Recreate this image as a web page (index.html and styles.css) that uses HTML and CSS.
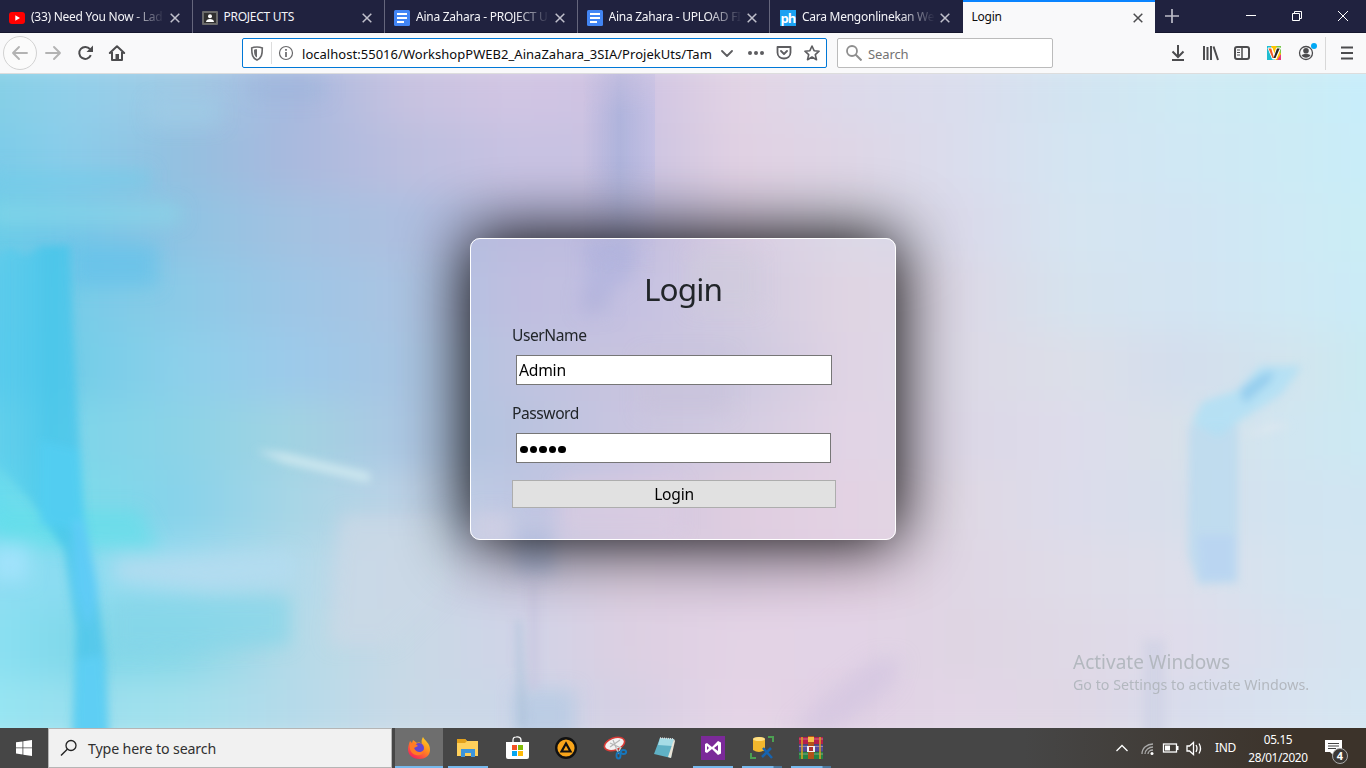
FILE: index.html
```html
<!DOCTYPE html>
<html lang="en">
<head>
<meta charset="utf-8">
<title>Login</title>
<link rel="stylesheet" href="styles.css">
</head>
<body>
<div class="screen">
  <header class="tabs">
    <div class="tab">
      <svg class="fav" viewBox="0 0 16 16"><rect y="2" width="16" height="12" rx="3" fill="#f00"/><path d="M6.3 5.3v5.4L11 8z" fill="#fff"/></svg>
      <span class="tab-title fade">(33) Need You Now - Lad</span>
      <svg class="x" viewBox="0 0 10 10"><path d="M.7.7l8.6 8.6M9.3.7L.7 9.3"/></svg>
    </div>
    <div class="tab">
      <svg class="fav" viewBox="0 0 16 16"><rect y="1" width="16" height="14" rx="1" fill="#6b6b6b"/><rect x="2" y="3" width="12" height="10" fill="#303030"/><circle cx="8" cy="6.300" r="2" fill="#fff"/><path d="M4 12c0-4 8-4 8 0z" fill="#fff"/></svg>
      <span class="tab-title">PROJECT UTS</span>
      <svg class="x" viewBox="0 0 10 10"><path d="M.7.7l8.6 8.6M9.3.7L.7 9.3"/></svg>
    </div>
    <div class="tab">
      <svg class="fav" viewBox="0 0 16 16"><rect width="16" height="16" rx="1.500" fill="#4285f4"/><path d="M3 4h10M3 8h10M3 12h7" stroke="#fff" stroke-width="1.800"/></svg>
      <span class="tab-title fade">Aina Zahara - PROJECT U</span>
      <svg class="x" viewBox="0 0 10 10"><path d="M.7.7l8.6 8.6M9.3.7L.7 9.3"/></svg>
    </div>
    <div class="tab">
      <svg class="fav" viewBox="0 0 16 16"><rect width="16" height="16" rx="1.500" fill="#4285f4"/><path d="M3 4h10M3 8h10M3 12h7" stroke="#fff" stroke-width="1.800"/></svg>
      <span class="tab-title fade">Aina Zahara - UPLOAD FI</span>
      <svg class="x" viewBox="0 0 10 10"><path d="M.7.7l8.6 8.6M9.3.7L.7 9.3"/></svg>
    </div>
    <div class="tab">
      <span class="fav ph">ph</span>
      <span class="tab-title fade">Cara Mengonlinekan We</span>
      <svg class="x" viewBox="0 0 10 10"><path d="M.7.7l8.6 8.6M9.3.7L.7 9.3"/></svg>
    </div>
    <div class="tab active">
      <span class="tab-title">Login</span>
      <svg class="x" viewBox="0 0 10 10"><path d="M.7.7l8.6 8.6M9.3.7L.7 9.3"/></svg>
    </div>
    <svg class="plus" viewBox="0 0 14 14"><path d="M7 0v14M0 7h14"/></svg>
    <svg class="winbtns" viewBox="0 0 112 20"><g fill="none" stroke="#fff" stroke-width="1"><path d="M6 9.500h10M52.500 7.500h7v7h-7zM54.500 7.500v-2h7v7h-2M98 5l10 10M108 5l-10 10"/></g></svg>
  </header>

  <nav class="toolbar">
    <svg class="navicons" viewBox="0 0 140 40">
      <circle cx="20" cy="20" r="16.500" fill="#fbfbfb" stroke="#d2d2d2"/>
      <g fill="none" stroke="#b3b3b3" stroke-width="1.900" stroke-linecap="round" stroke-linejoin="round"><path d="M27 20H13M19 14l-6 6 6 6M46 20h14M54 14l6 6-6 6"/></g>
      <path d="M90 16.200a6 6 0 1 0 .8 6" fill="none" stroke="#4c4c4e" stroke-width="2"/><path d="M93 12.500v6.500h-6.500z" fill="#4c4c4e"/>
      <path d="M109.800 20l7.200-6.800 7.200 6.800M112 19v8h10v-8" fill="none" stroke="#4c4c4e" stroke-width="2" stroke-linejoin="round" stroke-linecap="round"/><path d="M115.500 27v-6h3.500v6z" fill="#4c4c4e"/>
    </svg>
    <div class="urlbar">
      <svg class="urlleft" viewBox="0 0 52 28">
        <path d="M14 8c-2 0-3.800.3-5.300.9 0 6.500.6 10 5.300 12.100 4.700-2.100 5.300-5.600 5.300-12.100C17.800 8.300 16 8 14 8z" fill="none" stroke="#68686a" stroke-width="1.600"/><path d="M14 10.300c-1.200 0-2 .1-3 .4 0 4.300.5 6.400 3 7.900z" fill="#68686a"/>
        <path d="M28.500 3v22" stroke="#ddd"/>
        <circle cx="43" cy="14" r="6.500" fill="none" stroke="#68686a" stroke-width="1.200"/><path d="M43 13v5M43 10v1.800" stroke="#68686a" stroke-width="1.700"/>
      </svg>
      <span class="url">localhost:55016/WorkshopPWEB2_AinaZahara_3SIA/ProjekUts/Tam</span>
      <svg class="urlright" viewBox="0 0 106 28">
        <g fill="none" stroke="#5d5d60" stroke-width="1.800" stroke-linecap="round" stroke-linejoin="round"><path d="M2 12l5 5 5-5M57.500 8h13v5.500c0 8-13 8-13 0zM61 12l3 3 3-3"/><path d="M92 7l2.100 4.700 5 .5-3.800 3.500 1.200 5-4.500-2.700-4.500 2.700 1.200-5-3.800-3.500 5-.5z" stroke-width="1.600"/></g>
        <g fill="#5d5d60"><circle cx="30" cy="14" r="2"/><circle cx="36" cy="14" r="2"/><circle cx="42" cy="14" r="2"/></g>
      </svg>
    </div>
    <div class="search">
      <svg class="mag" viewBox="0 0 16 16"><circle cx="6" cy="6" r="5" fill="none" stroke="#8e8e8e" stroke-width="1.800"/><path d="M9.500 9.500l6 6" stroke="#8e8e8e" stroke-width="2"/></svg>
      <span>Search</span>
    </div>
    <svg class="tools" viewBox="0 0 206 40">
      <g fill="none" stroke="#4c4c4e" stroke-width="2">
        <path d="M18 12v12M12.500 18.500L18 24l5.500-5.500M12 27h12"/>
        <path d="M44 13v14M47.500 14v13M51 13v14M53.500 13.500L58 27"/>
        <rect x="75" y="14" width="14" height="12" rx="2"/><path d="M82 14v12" stroke-width="1.500"/><path d="M77 17h3M77 19.500h3M77 22h3" stroke-width="1"/>
        <circle cx="146" cy="20" r="6.500" stroke-width="1.300"/>
        <path d="M181 14.500h12M181 20h12M181 25.500h12"/>
      </g>
      <rect x="107" y="13" width="14" height="14" rx="1" fill="#ffc400"/><path d="M107 13h4l4 14h-8z" fill="#20bdd0"/><path d="M116 13h5v8z" fill="#76c84a"/><path d="M117 27l4-6v6z" fill="#e6397d"/><path d="M108 15h4l2.500 7L116.500 15h4l-4.500 11h-3.500z" fill="#fff" stroke="#fff"/><path d="M108.500 15.500h2.800l2.700 9.500h-1.500z" fill="#f05a28"/><path d="M113.500 25l3.500-9.500h2.700L115.500 25z" fill="#222"/>
      <circle cx="146" cy="17.800" r="2.800" fill="#4c4c4e"/><path d="M141.500 22c2-1.500 7-1.500 9 0-1.500 3.500-7.500 3.500-9 0z" fill="#4c4c4e"/>
      <circle cx="154" cy="13" r="3" fill="#00a8f5"/>
      <path d="M165.500 4v33" stroke="#d8d8d8"/>
    </svg>
  </nav>

  <main class="page">
    <div class="wash">
      <i class="r r1"></i><i class="r r2"></i><i class="r r3"></i><i class="r r4"></i><i class="r r5"></i>
      <i class="r r6"></i><i class="r r7"></i><i class="r r8"></i><i class="r r9"></i><i class="r r10"></i>
    </div>
    <svg class="strokes" viewBox="0 74 1366 654">
      <defs>
        <filter id="b3" x="-50%" y="-50%" width="200%" height="200%"><feGaussianBlur stdDeviation="4"/></filter>
        <filter id="b7" x="-50%" y="-50%" width="200%" height="200%"><feGaussianBlur stdDeviation="9"/></filter>
        <linearGradient id="pp"><stop offset="0" stop-color="#a9addb" stop-opacity="0"/><stop offset=".5" stop-color="#a8b0da" stop-opacity=".8"/><stop offset="1" stop-color="#c3bfe4" stop-opacity=".85"/></linearGradient>
        <linearGradient id="fd" x1="0" y1="0" x2="0" y2="1"><stop offset="0" stop-color="#fff" stop-opacity=".5"/><stop offset=".2" stop-color="#fff"/><stop offset=".45" stop-color="#fff"/><stop offset="1" stop-color="#fff" stop-opacity="0"/></linearGradient>
        <mask id="mk" maskUnits="userSpaceOnUse" x="570" y="74" width="100" height="200"><rect x="570" y="74" width="100" height="200" fill="url(#fd)"/></mask>
        <linearGradient id="cy"><stop offset="0" stop-color="#58cdee" stop-opacity=".5"/><stop offset=".5" stop-color="#45c5ea"/><stop offset="1" stop-color="#4fc5ec"/></linearGradient>
      </defs>
      <g filter="url(#b7)">
        <path d="M72 245h85v42H72z" fill="#65c2ea" opacity=".7"/>
        <path d="M-10 170h160v18H-10z" fill="#70cbe8" opacity=".6"/>
        <path d="M-10 205h190v18H-10z" fill="#8bdbe8" opacity=".6"/>
        <path d="M-10 510h150l20 40-160-5z" fill="#5edfea" opacity=".6"/>
        <path d="M-8 545h36v36H-8z" fill="#a0e2fa"/>
        <path d="M115 560l180-8v28l-80 10-100-10z" fill="#b4dcf0" opacity=".9"/>
        <path d="M112 598l178-3v50l-178 10z" fill="#84d6e8" opacity=".7"/>
        <path d="M340 515h110v70l-60 60h-60z" fill="#cad8e6" opacity=".8"/>
        <path d="M250 80h75v18h-75z" fill="#9cb3dc" opacity=".5"/>
        <path d="M150 100h70v25h-70z" fill="#9fcbe6" opacity=".6"/>
        <path d="M585 240h50v35l-48 35z" fill="#adb1dd" opacity=".6"/>
        <path d="M580 290h30v25h-30z" fill="#adb0d8" opacity=".4"/>
        <path d="M690 250h70v60h-70z" fill="#cfcbdc" opacity=".5"/>
        <path d="M640 355h90v60h-90z" fill="#c7c2da" opacity=".5"/>
        <path d="M560 480h120v55H560z" fill="#dccde1" opacity=".6"/>
        <path d="M472 512h40v30h-40z" fill="#d3d0e4" opacity=".7"/>
        <path d="M515 530h38l2 45h-40z" fill="#adb9dc" opacity=".7"/>
        <path d="M515 690h60v50h-60z" fill="#b7cae4" opacity=".8"/>
        <path d="M790 728l50-45 35-25h28l-10 30-60 45z" fill="#cfc2e0" opacity=".55"/>
      </g>
      <g filter="url(#b3)">
        <path d="M-12 260l22-12 16 8 14-10 30-1 3 90 6 100 5 80 11 60 11 85 3 80H72l4-110-12-80-34-50-42-45z" fill="url(#cy)" opacity=".8"/>
        <path d="M40 440l40 10 5 80-45-5z" fill="#52cef4" opacity=".7"/>
        <path d="M72 520l12 0 14 70-10 40-13-40z" fill="#60ccf8" opacity=".8"/>
        <path d="M77 660l25-5 6 85H75z" fill="#5fcff5" opacity=".8"/>
        <path d="M1189 425h49v158l-40 2-10-30z" fill="#bcdaef" opacity=".85"/>
        <path d="M1197 535h38v45h-34z" fill="#bad5f1"/>
        <path d="M1192 422l10-20 36-12 22-24h42l-20 28-44 28-20 15z" fill="#b2e0f4" opacity=".9"/>
        <path d="M1240 390l20-15 15-5-5 12-26 22z" fill="#92cced" opacity=".9"/>
        <path d="M1242 436l32-14 18 4-30 8z" fill="#e2eaf0" opacity=".6"/>
        <path d="M1143 640h22v100h-22z" fill="#c9d0e4" opacity=".5"/>
        <path d="M516 620h5l6 108h-9z" fill="#adc2da" opacity=".7"/>
        <path d="M530 580h8v110h-8z" fill="#c4c2de" opacity=".6"/>
        <path d="M255 450l30 3 85 20v10l-85-20z" fill="#cfe8ef" opacity=".95"/>
      </g>
      <path d="M583 74h72v200H583z" fill="url(#pp)" mask="url(#mk)"/>
    </svg>
    <form class="card">
      <h2 class="title">Login</h2>
      <label class="label">UserName</label>
      <div class="field">Admin</div>
      <label class="label">Password</label>
      <div class="field pw"><i></i><i></i><i></i><i></i><i></i></div>
      <div class="btn">Login</div>
    </form>
    <div class="watermark"><div class="w1">Activate Windows</div><div class="w2">Go to Settings to activate Windows.</div></div>
  </main>

  <footer class="taskbar">
    <div class="start"><svg viewBox="0 0 16 16" width="16" height="16"><path d="M0 2.300l6.500-.9v6.100H0zM7.300 1.300L16 0v7.500H7.300zM0 8.300h6.500v6.200L0 13.600zM7.300 8.300H16V16l-8.700-1.300z" fill="#fff"/></svg></div>
    <div class="find"><svg viewBox="0 0 18 18" width="18" height="18"><circle cx="11" cy="6.500" r="5" fill="none" stroke="#222" stroke-width="1.300"/><path d="M7.300 10.200L1 16.500" stroke="#222" stroke-width="1.400"/></svg><span>Type here to search</span></div>
    <div class="apps">
      <div class="app on full">
        <svg viewBox="0 0 24 24"><defs><linearGradient id="ff" x1="1" y1="0" x2=".3" y2="1"><stop offset="0" stop-color="#ffe226"/><stop offset=".5" stop-color="#ff8a1f"/><stop offset="1" stop-color="#f5235a"/></linearGradient></defs><path d="M3 5l2 2 1-3 4 3c2-1 4 0 5 1-1-3 0-5 1-7 2 4 7 6 7 13 0 12-21 12-22 0C1 10 2 8 3 5z" fill="url(#ff)"/><circle cx="12" cy="12" r="5" fill="#6546cf"/><path d="M3 8c4-2 6 0 8 2l-4 2c2 5 7 5 10 2-1 5-5 6-8 5-5-1-7-6-6-11z" fill="#ff7b24"/></svg>
      </div>
      <div class="app on"><svg viewBox="0 0 24 24"><path d="M1 3h8l2 2h11v15H1z" fill="#ffd05b"/><path d="M1 3h8l2 2-2 2H1z" fill="#e3a11b"/><path d="M5 21v-8h14v8h-4v-4H9v4z" fill="#3d95dc"/></svg></div>
      <div class="app"><svg viewBox="0 0 24 24"><path d="M1 6h23v15q0 2-2 2H3q-2 0-2-2z" fill="#fff"/><path d="M8 7V4q0-3 3-3h2q3 0 3 3v3M11 1q5-1 5 4" fill="none" stroke="#fff" stroke-width="1.200"/><path d="M7 9h5v5H7z" fill="#f35325"/><path d="M13 9h5v5h-5z" fill="#81bc06"/><path d="M7 15h5v5H7z" fill="#05a6f0"/><path d="M13 15h5v5h-5z" fill="#ffba08"/></svg></div>
      <div class="app"><svg viewBox="0 0 24 24"><circle cx="12" cy="12" r="9.800" fill="#f9a51a" stroke="#111" stroke-width="2.400"/><path d="M12 7.500L7.500 15.500h9z" fill="none" stroke="#111" stroke-width="2.200"/></svg></div>
      <div class="app"><svg viewBox="0 0 24 24"><ellipse cx="11.500" cy="8" rx="10.500" ry="6" transform="rotate(-20 11.500 8)" fill="#f3f3f3" stroke="#d83b36" stroke-width="1.600"/><path d="M7 11l10-7M10 4l4 10M7 7l11 5" stroke="#b5b5b5" stroke-width="1.200"/><path d="M13 12l3 6M18 11l-2 4" stroke="#ccc" stroke-width="1.500"/><g fill="none" stroke="#1677bd" stroke-width="1.900"><ellipse cx="15.500" cy="19.500" rx="2" ry="3"/><ellipse cx="20.500" cy="16" rx="2.700" ry="2"/></g></svg></div>
      <div class="app"><svg viewBox="0 0 24 24"><path d="M8 2l14 1-3 19-17-4z" fill="#5fb1c5"/><path d="M8 2l14 1-1.500 7L6 9z" fill="#a5dce6"/><path d="M22 3l1 2-4 17-3-1z" fill="#e9e4d7"/><path d="M8 2l14 1" stroke="#ddd" stroke-width="1.500" stroke-dasharray="1 1"/></svg></div>
      <div class="app on"><svg viewBox="0 0 24 24"><path d="M0 0h24v24H0z" fill="#7b2a99"/><path d="M4 8l2-1 5 4 6-6 3 1.500v11L17 19l-6-6-5 4-2-1zM6 10v4l2-2zM17 9l-4 3 4 3z" fill="#fff" fill-rule="evenodd"/></svg></div>
      <div class="app on split"><svg viewBox="0 0 24 24"><path d="M3 3q6-4 12 0v11q-6 4-12 0z" fill="#f2b72d"/><ellipse cx="9" cy="3" rx="6" ry="2" fill="#ffe083"/><path d="M18 1h5v5M1 17v5h5" fill="none" stroke="#4ca052" stroke-width="2"/><path d="M12 21l9-9M13 12l9 10" stroke="#1764b0" stroke-width="2.500"/></svg></div>
      <div class="app on split"><svg viewBox="0 0 24 24"><path d="M0 1h24v7H0z" fill="#b41f4d"/><path d="M0 8.500h24v7H0z" fill="#504a9b"/><path d="M0 16h24v7H0z" fill="#238344"/><path d="M0 3h24M0 10.500h24M0 18h24" stroke="#e4c5bd" stroke-width="1" opacity=".5"/><path d="M3 1v22M21 1v22" stroke="#dda321" stroke-width="1.500"/><path d="M9 0h6v23H9z" fill="#b25219"/><path d="M9 1h6v5H9z" fill="#f5c044"/><path d="M8 10h8v6H8z" fill="#eee"/><path d="M10 11h4v4h-4z" fill="#a33"/></svg></div>
    </div>
    <svg class="tray" viewBox="0 0 90 40"><g fill="none" stroke="#fff" stroke-width="1.300"><path d="M3.500 23l5.500-5.500 5.500 5.500"/><g stroke="#aaa"><path d="M29 26c0-6 5-10 11-10M32 26c0-4 4-7 8-7M35 26c0-2 2-4 5-4"/></g><rect x="50.500" y="16" width="13" height="8"/><path d="M74 18h2.500l4-3.500v12l-4-3.500H74zM83 17q2 3 0 7M86 15.500q3 5 0 10"/></g><circle cx="39" cy="25.500" r="1.500" fill="#fff"/><path d="M52 17.500h5v5h-5zM64 18h1.500v4H64z" fill="#fff"/></svg>
    <span class="lang">IND</span>
    <div class="clock"><div>05.15</div><div>28/01/2020</div></div>
    <div class="note"><svg viewBox="0 0 17 17" width="17" height="17"><path d="M0 0h17v12h-8v4l-4-4H0z" fill="#fff"/><path d="M3 3.500h11M3 6h11M3 8.500h8" stroke="#444"/></svg><b class="badge">4</b></div>
  </footer>
</div>
</body>
</html>
```

FILE: styles.css
```css
* { box-sizing: border-box; }
body { margin: 0; background: #f9f9fa; font-family: "Noto Sans", "Open Sans", sans-serif; }
.screen { width: 1366px; height: 768px; display: flex; flex-direction: column; overflow: hidden; }
svg { display: block; flex: none; }

.tabs { height: 33px; flex: none; background: #20223f; display: flex; box-shadow: inset 0 -1px #15172e; }
.tab { width: 192.500px; flex: none; display: flex; align-items: center; padding: 2px 12px 0 9px; border-right: 1px solid #65667c; color: #f4f4f8; }
.tab:nth-child(5) { border-right: 0; padding-left: 10px; padding-right: 13px; }
.fav { width: 16px; height: 16px; margin-right: 6px; flex: none; }
.ph { background: #1ba1f2; color: #fff; font: bold 13px/17px "Open Sans", sans-serif; letter-spacing: -1px; text-align: center; }
.tab-title { flex: 1; min-width: 0; font-size: 12px; letter-spacing: -.26px; line-height: 18px; white-space: nowrap; margin: -1px 4px 0 0; }
.fade { -webkit-mask-image: linear-gradient(90deg, #000 calc(100% - 36px), transparent calc(100% - 1px)); mask-image: linear-gradient(90deg, #000 calc(100% - 36px), transparent calc(100% - 1px)); }
.x { width: 10px; height: 10px; fill: none; stroke: #c0c0cc; stroke-width: 1.500; }
.active { background: #f9f9fa; color: #0c0c0d; border: 0; border-top: 2px solid #0a84ff; padding-top: 0; }
.active .x { stroke: #4c4c4e; }
.plus { width: 14px; height: 14px; margin: 9px 0 0 10px; stroke: #bdbdc9; stroke-width: 1.700; }
.winbtns { width: 112px; height: 20px; margin: 6px 14px 0 auto; }

.toolbar { height: 41px; flex: none; background: #f9f9fa; display: flex; align-items: center; border-bottom: 1px solid #ddd; }
.navicons { width: 140px; height: 40px; }
.urlbar { width: 585px; height: 30px; margin-left: 102px; display: flex; align-items: center; background: #fff; border: 1px solid #0078d7; border-radius: 2px; }
.urlleft { width: 52px; height: 28px; }
.url { flex: 1; margin-left: 7px; padding-top: 1px; font-size: 13px; letter-spacing: .03px; white-space: nowrap; color: #0c0c0d; }
.urlright { width: 106px; height: 28px; }
.search { width: 216px; height: 30px; margin-left: 10px; padding-left: 8px; display: flex; align-items: center; gap: 6px; background: #fff; border: 1px solid #bbb; border-radius: 2px; color: #737373; font-size: 13px; letter-spacing: -.1px; line-height: 20px; }
.search span { padding-top: 1px; }
.mag { width: 16px; height: 16px; }
.tools { width: 206px; height: 40px; margin-left: auto; }

.page { height: 654px; flex: none; position: relative; overflow: hidden; display: flex; justify-content: center; align-items: flex-start; }
.wash { position: absolute; inset: 0 -40px; display: flex; flex-direction: column; filter: blur(16px); margin: -20px 0; }
.r { flex: 1; }
.r1 { background: linear-gradient(90deg,#80cfe4,#90cfea,#9fc9e4,#a6b8de,#c7c2e0,#d1c5e3,#cdc2e2,#e2d3e4,#dcd9ea,#dadded,#d2e4f1,#cfeaf4,#cbecf5,#c6eefe); }
.r2 { background: linear-gradient(90deg,#76cce8,#8bcdea,#94c0e0,#a9b9de,#bcbfdf,#c8c2e2,#c9c2e1,#e1d1e3,#ded6e6,#dadded,#d4e5f2,#d0e8f4,#ccebf5,#c7eefb); }
.r3 { background: linear-gradient(90deg,#68cfe8,#74c7e8,#8fc3e3,#a3c2e1,#aebfe0,#bcbcdf,#bebbde,#d9cde2,#dcd8e6,#dad9ea,#d6e5f1,#d2e5f3,#ceeaf5,#c8eff5); }
.r4 { background: linear-gradient(90deg,#54c9ec,#76cce8,#8ccae7,#9ec6e6,#abc4e2,#bfbee0,#c4c0e1,#d2cbe0,#e0d5e3,#dcd8e6,#d6e3ee,#d3e4f2,#cfe9f4,#c8ecf8); }
.r5 { background: linear-gradient(90deg,#4fc9ee,#72cde8,#8dd0ea,#9dcaea,#a8c5e2,#bec3e0,#c8c3df,#cdc8df,#e0d4e4,#dcd9e6,#dcdfe9,#d3deed,#d2e5ee,#c6edf4); }
.r6 { background: linear-gradient(90deg,#62d0ea,#7dd5ea,#8cd3e7,#a2d3e2,#acc7e3,#b9c3df,#c9c5e0,#d4cce1,#e2d4e5,#dcd7e6,#dddceb,#d8e1ea,#d0e6f1,#caebf4); }
.r7 { background: linear-gradient(90deg,#60dcf0,#7bdcea,#88d2ea,#a8d6e6,#bdd2e6,#bec6e2,#cfc7e1,#dfcde0,#e3d2e3,#dfd8e4,#dcdceb,#d7dfeb,#d1e4f1,#d0e6f3); }
.r8 { background: linear-gradient(90deg,#90def4,#8adcf0,#a0dcf0,#b3daea,#c9d8e7,#cfcee4,#dccee0,#dccce0,#e3d0e2,#dfd6e4,#dfdce8,#dddfeb,#d4e4f0,#d2e6f2); }
.r9 { background: linear-gradient(90deg,#90e4f6,#80d8ea,#8ad8e8,#b5dae8,#c8d9e6,#d0d4e7,#dccfe2,#e3d3e5,#e2d3e6,#dfd5e3,#dfd9e6,#dfdceb,#d8e1ee,#d2e7f2); }
.r10 { background: linear-gradient(90deg,#96e8f4,#98dfee,#a4e0ec,#b5daea,#c9d9e6,#ccd6e8,#d6cfe3,#e5d4e6,#e0d0e4,#e2d6e6,#dfd7e5,#d8dcec,#d8e3f0,#d2e8f3); }
.strokes { position: absolute; inset: 0; width: 1366px; height: 654px; }

.card { position: relative; width: 426px; height: 302px; margin: 164px 0 0; padding: 32px 40px 0; border: 1px solid #fff; border-radius: 10px; box-shadow: 0 0 66px 3px #000; color: #212529; display: flex; flex-direction: column; }
.title { margin: -1px 0 9px; font-size: 31.500px; letter-spacing: -.9px; line-height: 38px; font-weight: 400; text-align: center; }
.label { font-size: 15.600px; letter-spacing: -.45px; line-height: 24px; margin: 6px 0 0 1px; }
.field { width: 316px; height: 30px; margin: 8px 0 10px 5px; padding: 0 2px; background: #fff; border: 1px solid #767676; color: #000; font-size: 15.700px; letter-spacing: -.25px; line-height: 28px; }
.pw { width: 315px; display: flex; align-items: center; gap: 2.100px; padding: 3px 3px 0; margin-bottom: 17px; }
.pw i { width: 7.500px; height: 7.500px; border-radius: 50%; background: #000; }
.btn { width: 324px; height: 28px; margin-left: 1px; border: 1px solid #adadad; background: #e1e1e1; color: #000; font-size: 15.600px; letter-spacing: -.25px; line-height: 27px; text-align: center; }
.watermark { position: absolute; left: 1073px; top: 575px; color: #b3b8bf; white-space: nowrap; }
.w1 { font-size: 19px; line-height: 26px; }
.w2 { font-size: 14.250px; line-height: 20px; }

.taskbar { height: 40px; flex: none; display: flex; background: linear-gradient(90deg, #464646 75%, #3c332a 95%); color: #fff; }
.start { width: 48px; display: flex; align-items: center; justify-content: center; }
.find { width: 344px; background: #f1f1f1; border: 1px solid #b5b5b5; display: flex; align-items: center; padding-left: 11px; gap: 10px; font-size: 14.200px; letter-spacing: -.13px; color: #303030; }
.apps { display: flex; margin-left: 3px; }
.app { width: 49px; height: 40px; display: flex; justify-content: center; align-items: center; position: relative; }
.app svg { width: 24px; height: 24px; }
.app.on::after { content: ""; position: absolute; bottom: 0; left: 5px; right: 4px; height: 2px; background: #76b9ed; }
.app.full { background: #6e6e6e; width: 48px; }
.app.full::after { left: 0; right: 0; }
.app.split::after { background: linear-gradient(90deg, #76b9ed 31px, #4b779b 32px); }
.tray { width: 90px; height: 40px; margin-left: auto; }
.lang { width: 34px; padding-left: 11px; font-size: 12px; letter-spacing: -.4px; line-height: 40px; margin-left: 1px; }
.clock { width: 80px; margin-right: 6px; text-align: center; font-size: 11.800px; letter-spacing: -.35px; line-height: 18px; padding-top: 2px; }
.note { width: 42px; position: relative; padding: 12px 0 0 1px; }
.badge { position: absolute; left: 8px; top: 20px; width: 16px; height: 16px; border: 1px solid #aaa; border-radius: 50%; background: #3c3835; font-size: 11px; line-height: 14px; text-align: center; }
```
